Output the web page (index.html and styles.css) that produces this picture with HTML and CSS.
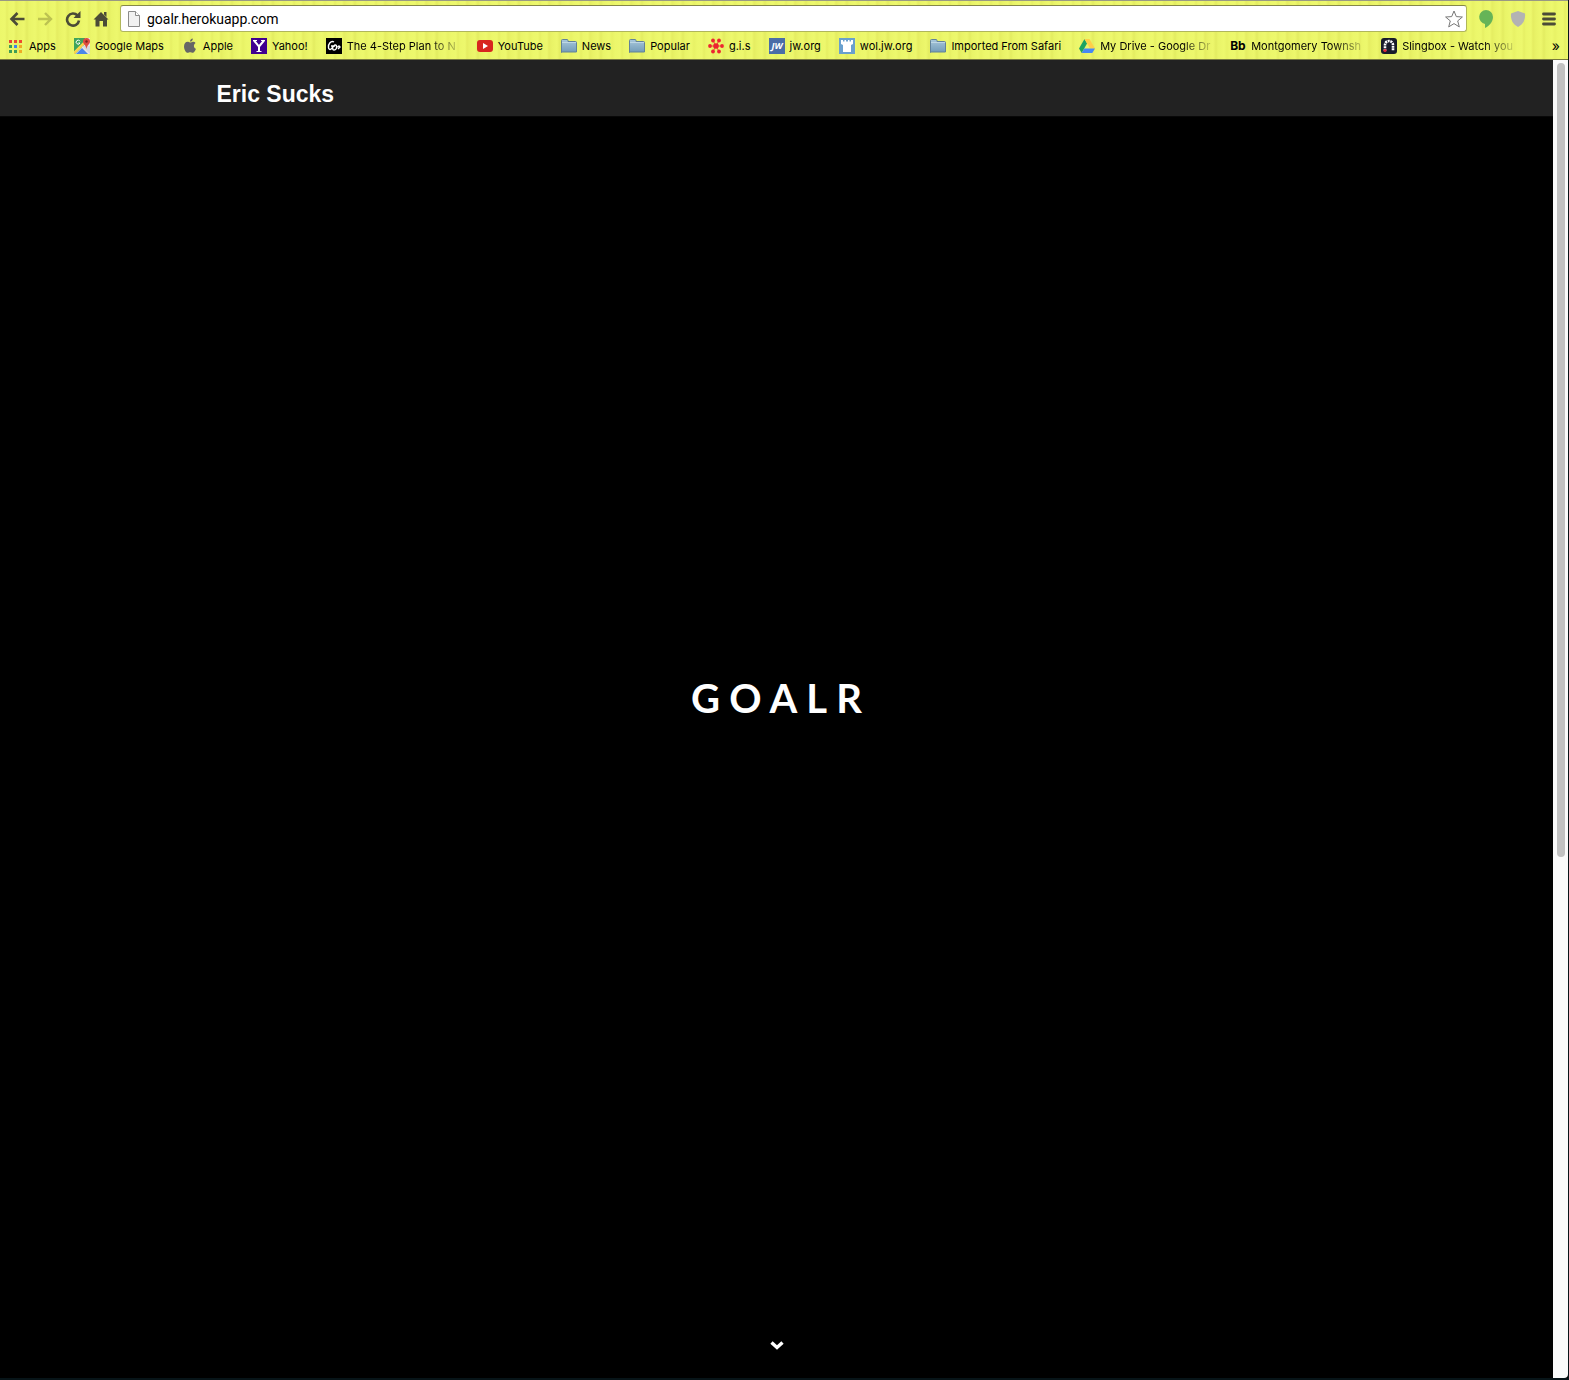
FILE: index.html
```
<!DOCTYPE html>
<html lang="en">
<head>
<meta charset="utf-8">
<meta name="viewport" content="width=device-width, initial-scale=1">
<title>goalr</title>
<link rel="stylesheet" href="styles.css">
</head>
<body>
<svg class="defs" aria-hidden="true">
  <linearGradient id="folderFill" x1="0" y1="0" x2="0" y2="1"><stop offset="0" stop-color="#a9c8dc"/><stop offset="1" stop-color="#719bb7"/></linearGradient>
  <symbol id="folder" viewBox="0 0 16 16"><path d="M.5 14.500V2.500q0-1 1-1H6q1 0 1 1v1h7.500q1 0 1 1v9.500h-15z" fill="url(#folderFill)" stroke="#638299"/><path d="M1 4.500h14" stroke="#bed7e4"/></symbol>
</svg>
<header class="browser">
  <div class="toolbar">
    <nav class="controls">
      <button class="tool" aria-label="Back"><svg width="16" height="16" viewBox="0 0 16 16"><path d="M15.500 8H2.500M8.500 2L2.500 8l6 6" fill="none" stroke="#4b4b37" stroke-width="2.600"/></svg></button>
      <button class="tool" aria-label="Forward"><svg width="16" height="16" viewBox="0 0 16 16"><path d="M1 8h13M8 2l6 6-6 6" fill="none" stroke="#bcc251" stroke-width="2.400"/></svg></button>
      <button class="tool" aria-label="Reload"><svg width="16" height="16" viewBox="0 0 16 16"><path d="M12.500 4.500A6 6 0 1 0 14 9.500" fill="none" stroke="#4b4b37" stroke-width="2.600"/><path d="M15.500 0v7H8.500z" fill="#4b4b37"/></svg></button>
      <button class="tool" aria-label="Home"><svg width="16" height="16" viewBox="0 0 16 16"><path d="M8 1l7.500 7.500H14V15.500h-4V10H6.500v5.500h-4V8.500H.5zM11 1h2.500v5L11 3.500z" fill="#4b4b37"/></svg></button>
    </nav>
    <div class="omnibox">
      <svg width="12" height="16" viewBox="0 0 12 16"><path d="M.5.500h7l4 4v11H.5z" fill="#f1f1f1" stroke="#8b8b8b"/><path d="M7.500.500v4h4" fill="#fff" stroke="#8b8b8b"/></svg>
      <input class="address" type="text" aria-label="Address" value="goalr.herokuapp.com">
      <button class="star" aria-label="Bookmark this page"><svg width="18" height="18" viewBox="0 0 18 18"><path d="M9 1l2.300 5.600 6.100.4-4.700 3.900 1.600 6L9 13.600l-5.300 3.300 1.600-6L.6 7l6.100-.4z" fill="#fff" stroke="#777"/></svg></button>
    </div>
    <div class="extensions">
      <button class="tool" aria-label="Hangouts"><svg width="16" height="20" viewBox="0 0 16 20"><path d="M8 1a7 7 0 0 0-1 13.900V19c4-2 8-6 8-11a7 7 0 0 0-7-7z" fill="#66b457"/></svg></button>
      <button class="tool" aria-label="Shield"><svg width="16" height="18" viewBox="0 0 16 18"><path d="M8 1l7 2.500c.5 6-1.500 10.500-7 13.500C2.500 14 .5 9.500 1 3.500z" fill="#b3b3b3"/></svg></button>
      <button class="tool" aria-label="Menu"><svg width="14" height="14" viewBox="0 0 14 14"><path d="M1.500 2h11M1.500 7h11M1.500 12h11" stroke="#4b4b37" stroke-width="2.800" stroke-linecap="round"/></svg></button>
    </div>
  </div>
  <nav class="bookmarks" aria-label="Bookmarks">
    <a class="bookmark" href="#"><svg class="icon" viewBox="0 0 16 16"><path d="M1 2h3v3H1z" fill="#ec4133"/><path d="M6 2h3v3H6zM11 2h3v3h-3z" fill="#ed4932"/><path d="M1 7h3v3H1z" fill="#3e9e54"/><path d="M6 7h3v3H6z" fill="#3f86e8"/><path d="M11 7h3v3h-3z" fill="#efab25"/><path d="M1 12h3v3H1zM6 12h3v3H6z" fill="#3e9e54"/><path d="M11 12h3v3h-3z" fill="#efab25"/></svg><span class="label">Apps</span></a>
    <a class="bookmark" href="#"><svg class="icon" viewBox="0 0 16 16"><path d="M0 0h16v16H0z" fill="#e6e6e6"/><path d="M0 0h11v6L1 16H0z" fill="#3fa45b"/><path d="M2 16l6-6 6 6z" fill="#4a86e8"/><path d="M0 13L12 1l2 2L1 16H0z" fill="#f8d34b"/><path d="M8 8l8 8V8z" fill="#d5d8dc"/><path d="M0 0h9v4L0 13z" fill="#3fa45b"/><path d="M6 3.300A2 2 0 1 0 6 5H4.300" fill="none" stroke="#fff"/><path d="M12.500 0A3.500 3.500 0 0 0 9 3.500C9 6 12 7 12.500 11 13 7 16 6 16 3.500A3.500 3.500 0 0 0 12.500 0z" fill="#df4b3f"/><circle cx="12.500" cy="3.500" r="1.200" fill="#7c231e"/></svg><span class="label">Google Maps</span></a>
    <a class="bookmark" href="#"><svg class="icon" viewBox="0 0 16 16"><path d="M8 4.500c1 0 2-1 3.300-.8 1 .1 1.700.5 2.200 1.200-2.300 1.500-2 4.800.5 5.900C13.200 13 12 14.800 10.800 14.800c-1 0-1.500-.6-2.600-.6s-1.700.6-2.600.6C4 14.800 2 11.300 2 8.400 2 5.500 3.700 3.800 5.500 3.800c1 0 1.800.7 2.500.7zM8 3.600C7.900 2 9.300.6 10.800.4 11 2.100 9.600 3.600 8 3.600z" fill="#666"/></svg><span class="label">Apple</span></a>
    <a class="bookmark" href="#"><svg class="icon" viewBox="0 0 16 16"><path d="M0 0h16v16H0z" fill="#400090"/><path d="M3 2.500l5 6v5M13 2.500l-5 6" fill="none" stroke="#fff" stroke-width="2"/><path d="M2 2.500h4M10 2.500h4M5.500 13.500h5" stroke="#fff"/></svg><span class="label">Yahoo!</span></a>
    <a class="bookmark" href="#"><svg class="icon" viewBox="0 0 16 16"><path d="M0 0h16v16H0z"/><path d="M8 4C5 2 2 6 2.500 9.500c.3 3 3.500 2.500 4.500-1.500H5M7 8c-.5 3-.5 4 1 4 2 0 3-2 2.500-4S7.800 7 8 9M10 9.500c2-1.500 3-1 4-.5m-2 2l2-2-1.500-1.500" fill="none" stroke="#fff" stroke-width="1.400"/></svg><span class="label fade">The 4-Step Plan to N</span></a>
    <a class="bookmark" href="#"><svg class="icon" viewBox="0 0 16 16"><rect y="2" width="16" height="12" rx="3" fill="#d8251f"/><path d="M6 5l5 3-5 3z" fill="#fff"/></svg><span class="label">YouTube</span></a>
    <a class="bookmark" href="#"><svg class="icon"><use href="#folder"/></svg><span class="label">News</span></a>
    <a class="bookmark" href="#"><svg class="icon"><use href="#folder"/></svg><span class="label">Popular</span></a>
    <a class="bookmark" href="#"><svg class="icon" viewBox="0 0 16 16"><g fill="#ed2630"><circle cx="8" cy="8" r="2.800"/><circle cx="2" cy="8" r="1.900"/><circle cx="14" cy="8" r="1.900"/><circle cx="5" cy="2.500" r="1.900"/><circle cx="11" cy="2.500" r="1.900"/><circle cx="5" cy="13.500" r="1.900"/><circle cx="11" cy="13.500" r="1.900"/></g><path d="M2 8h12M5 2.500l6 11M11 2.500l-6 11" stroke="#ed2630" stroke-width=".8"/></svg><span class="label">g.i.s</span></a>
    <a class="bookmark" href="#"><svg class="icon" viewBox="0 0 16 16"><path d="M0 0h16v16H0z" fill="#4a6da7"/><text x="8" y="11" class="jw" text-anchor="middle">JW</text></svg><span class="label">jw.org</span></a>
    <a class="bookmark" href="#"><svg class="icon" viewBox="0 0 16 16"><path d="M0 0h16v16H0z" fill="#69a0ce"/><path d="M2 2h2v1.500h1.500V2h1.500v1.500h2V2h1.500v1.500H12V2h2v4l-2 1V14H4V7L2 6z" fill="#fff"/></svg><span class="label">wol.jw.org</span></a>
    <a class="bookmark" href="#"><svg class="icon"><use href="#folder"/></svg><span class="label">Imported From Safari</span></a>
    <a class="bookmark" href="#"><svg class="icon" viewBox="0 0 16 16"><path d="M5.500 1L8 5.500 2.700 15 0 10.500z" fill="#1da362"/><path d="M5.500 1h5L16 10.500h-5z" fill="#ffcf48"/><path d="M5.300 10.500H16L13.300 15H2.700z" fill="#4688f4"/></svg><span class="label fade">My Drive - Google Dr</span></a>
    <a class="bookmark" href="#"><b class="icon bb">Bb</b><span class="label fade">Montgomery Townsh</span></a>
    <a class="bookmark" href="#"><svg class="icon" viewBox="0 0 16 16"><rect width="16" height="16" rx="3" fill="#191c2b"/><path d="M4 13V7a4 4 0 0 1 8 0v6" fill="none" stroke="#fff" stroke-width="2.600" stroke-dasharray="2 .7"/><circle cx="4" cy="12.500" r="1.600" fill="#df2435"/></svg><span class="label fade">Slingbox - Watch you</span></a>
    <button class="more" aria-label="More bookmarks">»</button>
  </nav>
</header>
<div class="viewport">
  <div class="page">
    <nav class="navbar"><div class="container"><a class="brand" href="#">Eric Sucks</a></div></nav>
    <main class="hero">
      <h1 class="title">GOALR</h1>
      <a class="down" href="#" aria-label="Scroll down"><svg width="14" height="10" viewBox="0 0 14 10"><path d="M1.500 2.500L7 7.500l5.500-5" fill="none" stroke="#fff" stroke-width="3.400"/></svg></a>
    </main>
  </div>
  <div class="scrollbar"><div class="thumb"></div></div>
</div>
</body>
</html>
```
FILE: styles.css
```
* {
  box-sizing: border-box;
}

body {
  margin: 0;
  min-height: 100vh;
  display: flex;
  flex-direction: column;
  background: #000;
  font-family: Inter, "Liberation Sans", sans-serif;
  border-right: 1px solid #071418;
  border-bottom: 2px solid #071418;
}

button {
  padding: 0;
  border: 0;
  background: none;
  font: inherit;
  display: flex;
}

a {
  color: inherit;
  text-decoration: none;
}

.defs {
  width: 0;
  height: 0;
  position: absolute;
}

.browser {
  border-top: 1px solid #999983;
  border-bottom: 1px solid #77783f;
  background: repeating-linear-gradient(90deg, #ecf76b 0, #edf86d 5px, #e6ef64 7px, #ebf66a 9px, #edf86d 14px, #e5ed62 16px, #e9f367 19px, #edf76c 24px, #e3ec61 27px, #e9f468 29px, #edf86d 35px, #e8f266 38px, #ecf76b 41px);
}

.toolbar {
  display: flex;
  align-items: center;
  padding: 4px 12px 0 9px;
}

.controls {
  display: flex;
  gap: 12px;
  margin-right: 11px;
}

.omnibox {
  flex: 1;
  min-width: 0;
  height: 27px;
  display: flex;
  align-items: center;
  gap: 7px;
  padding: 0 3px 0 7px;
  background: #fff;
  border: 1px solid #b0b65b;
  border-top-color: #858848;
  border-radius: 3px;
}

.address {
  flex: 1;
  min-width: 0;
  padding: 0;
  border: 0;
  background: none;
  color: #000;
  font: 14px Roboto, sans-serif;
}

.extensions {
  display: flex;
  align-items: center;
  gap: 16px;
  margin-left: 11px;
}

.bookmarks {
  display: flex;
  align-items: center;
  gap: 18px;
  height: 27px;
  padding: 0 8px;
  font-size: 11px;
  line-height: 16px;
  color: #000;
}

.bookmark {
  display: flex;
  align-items: center;
  gap: 5px;
  flex: none;
}

.icon {
  width: 16px;
  height: 16px;
  flex: none;
}

.bb {
  font-size: 12px;
}

.jw {
  font: italic bold 9px "Open Sans", sans-serif;
  fill: #fff;
}

.label {
  white-space: nowrap;
}

.fade {
  width: 112px;
  mask-image: linear-gradient(90deg, #000 82px, transparent 117px);
  mask-size: 117px 100%;
}

.more {
  margin-left: auto;
  font-size: 14px;
}

.viewport {
  flex: 1;
  display: flex;
}

.page {
  flex: 1;
  display: flex;
  flex-direction: column;
}

.navbar {
  background: #222;
  border-bottom: 1px solid #080808;
}

.container {
  max-width: 1120px;
  margin: 0 auto;
  padding: 20px 0 8px;
}

.brand {
  display: block;
  color: #fff;
  font: bold 23px/28px "Liberation Sans", sans-serif;
}

.hero {
  flex: 1;
  display: flex;
  flex-direction: column;
  align-items: center;
  color: #fff;
  padding-bottom: 28px;
}

.title {
  margin: auto;
  padding-bottom: 62px;
  font: bold 40px/48px Lato, sans-serif;
  letter-spacing: 9px;
  text-indent: 9px;
}

.down {
  display: flex;
}

.scrollbar {
  width: 15px;
  padding: 3px 3px 3px 4px;
  background: #fafafa;
  border-radius: 0 0 4px 0;
}

.thumb {
  width: 8px;
  height: 60.5%;
  border-radius: 4px;
  background: #c1c1c1;
}
```
